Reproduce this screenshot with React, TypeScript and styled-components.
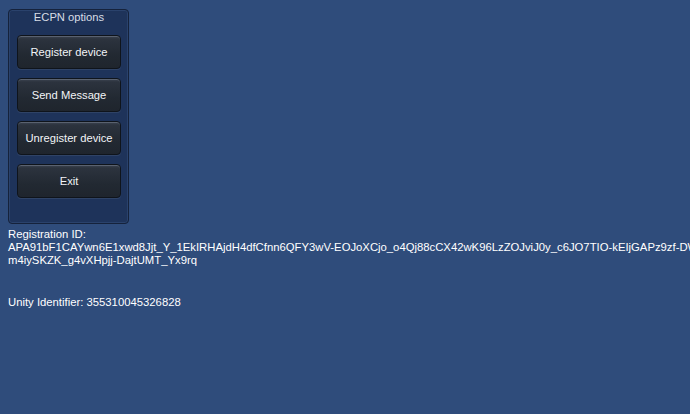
import styled, { createGlobalStyle } from "styled-components";

const GlobalStyle = createGlobalStyle`
  html, body {
    margin: 0;
    padding: 0;
    background: #2f4c7b;
    height: 100%;
    overflow: hidden;
  }
  body {
    font-family: "Liberation Sans", Arial, sans-serif;
    color: #ffffff;
  }
`;

const buttons = ["Register device", "Send Message", "Unregister device", "Exit"];

// the reference cuts the first line of the id at the right edge of the screen
const regId = [
  "APA91bF1CAYwn6E1xwd8Jjt_Y_1EkIRHAjdH4dfCfnn6QFY3wV-EOJoXCjo_o4Qj88cCX42wK96LzZOJviJ0y_c6JO7TIO-kEIjGAPz9zf-DW",
  "m4iySKZK_g4vXHpjj-DajtUMT_Yx9rq",
];

function App() {
  return (
    <>
      <GlobalStyle />
      <Screen>
        <Panel>
          <PanelTitle>ECPN options</PanelTitle>
          <ButtonList>
            {buttons.map((b) => (
              <MenuButton key={b}>{b}</MenuButton>
            ))}
          </ButtonList>
        </Panel>
        <Info>
          <Line>Registration ID:</Line>
          {regId.map((l) => (
            <Line key={l}>{l}</Line>
          ))}
        </Info>
        <Identifier>Unity Identifier: 355310045326828</Identifier>
      </Screen>
    </>
  );
}

const Screen = styled.div`
  width: 690px;
  height: 414px;
  padding: 9px 0 0 8px;
  box-sizing: border-box;
  display: flex;
  flex-direction: column;
  overflow: hidden;
`;

const Panel = styled.div`
  width: 121px;
  height: 215px;
  box-sizing: border-box;
  background: #1e335a;
  border: 1px solid #15223b;
  border-radius: 4px;
  box-shadow: inset 0 0 0 1px #2a426c;
  display: flex;
  flex-direction: column;
  align-items: center;
`;

const PanelTitle = styled.div`
  font-size: 11.2px;
  line-height: 13px;
  color: #d8dde6;
  margin-top: 1px;
  margin-left: 1px;
`;

const ButtonList = styled.div`
  display: flex;
  flex-direction: column;
  gap: 9px;
  margin-top: 11px;
  margin-left: 1px;
`;

const MenuButton = styled.button`
  width: 104px;
  height: 34px;
  box-sizing: border-box;
  border: 1px solid #0f141b;
  border-radius: 4px;
  background: linear-gradient(#3d4552 0px, #2c333e 3px, #222932 60%, #1f252d 100%);
  box-shadow: inset 0 1px 0 #5a6270, 0 1px 0 rgba(255, 255, 255, 0.08);
  color: #f2f4f7;
  font-family: "Liberation Sans", Arial, sans-serif;
  font-size: 11.2px;
  padding: 0 0 1px;
  text-align: center;
`;

const Info = styled.div`
  margin-top: 4px;
  font-size: 11.3px;
  line-height: 13px;
`;

const Line = styled.div`
  white-space: nowrap;
`;

const Identifier = styled.div`
  margin-top: 29px;
  font-size: 11.3px;
  line-height: 13px;
`;

export default App;
